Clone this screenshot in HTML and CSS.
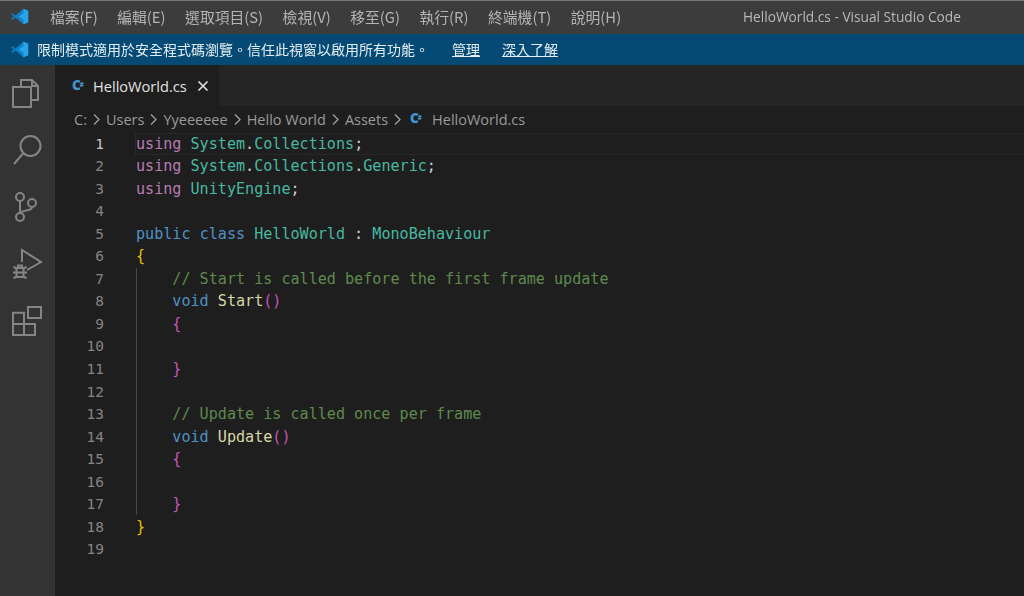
FILE: index.html
```html
<!DOCTYPE html>
<html lang="zh-TW">
<head>
<meta charset="utf-8">
<title>HelloWorld.cs - Visual Studio Code</title>
<link rel="stylesheet" href="styles.css">
</head>
<body>
<div class="app">
  <header class="titlebar">
    <svg class="logo" viewBox="0 0 24 24" preserveAspectRatio="none"><path class="logo-l" d="M17 1 23 4v16l-6 3L7 13.500l-4 3.200L1 15.600 5 12 1 8.400 3 7.300l4 3.200z"/><path class="logo-r" d="M17 1 23 4v16l-6 3zM17 7.500 11 12l6 4.500z" fill-rule="evenodd"/></svg>
    <nav class="menu">
      <span>檔案(F)</span><span>編輯(E)</span><span>選取項目(S)</span><span>檢視(V)</span><span>移至(G)</span><span>執行(R)</span><span>終端機(T)</span><span>說明(H)</span>
    </nav>
    <div class="wintitle">HelloWorld.cs - Visual Studio Code</div>
  </header>
  <div class="banner">
    <svg class="logo" viewBox="0 0 24 24" preserveAspectRatio="none"><path class="logo-l" d="M17 1 23 4v16l-6 3L7 13.500l-4 3.200L1 15.600 5 12 1 8.400 3 7.300l4 3.200z"/><path class="logo-r" d="M17 1 23 4v16l-6 3zM17 7.500 11 12l6 4.500z" fill-rule="evenodd"/></svg>
    <span class="banner-text">限制模式適用於安全程式碼瀏覽。信任此視窗以啟用所有功能。</span>
    <a class="banner-link first">管理</a>
    <a class="banner-link">深入了解</a>
  </div>
  <div class="main">
    <aside class="activity">
      <svg viewBox="0 0 55 57"><path d="M21 22V15H32L38 21V35H31M32 15V21H38M13 22H31V42H13Z"/></svg>
      <svg viewBox="0 0 55 57"><circle cx="30.500" cy="24" r="10"/><path d="M23 31.500 14 42"/></svg>
      <svg viewBox="0 0 55 57"><circle cx="20" cy="18" r="4"/><circle cx="32" cy="24" r="4"/><circle cx="20" cy="38" r="4"/><path d="M20 22V34M32 28C32 33 23 30 20.500 34"/></svg>
      <svg viewBox="0 0 55 57"><path d="M22 26V14L41 26 27 34"/><path d="M16.500 32H23.500V41H16.500ZM16.500 36.500H23.500M18 32V29.500H22V32M13.500 30.500 16.500 33M26.500 30.500 23.500 33M13 36.500H16.500M27 36.500H23.500M13.500 42.500 16.500 40M26.500 42.500 23.500 40"/></svg>
      <svg viewBox="0 0 55 57"><path d="M13 19.700H24V42H13ZM13 31H35V42H24M28 14H41V25H28Z"/></svg>
    </aside>
    <section class="editor-area">
      <div class="tabs">
        <div class="tab">
          <span class="cs-icon">C<sup>#</sup></span>
          <span class="tab-name">HelloWorld.cs</span>
          <svg class="close" viewBox="0 0 12 12"><path d="M1.500 1.500l9 9M10.500 1.500l-9 9"/></svg>
        </div>
      </div>
      <div class="crumbs">
        <span>C:</span>
        <svg class="chev" viewBox="0 0 7 11"><path d="M1 .5 6 5.500 1 10.500"/></svg><span>Users</span>
        <svg class="chev" viewBox="0 0 7 11"><path d="M1 .5 6 5.500 1 10.500"/></svg><span>Yyeeeeee</span>
        <svg class="chev" viewBox="0 0 7 11"><path d="M1 .5 6 5.500 1 10.500"/></svg><span>Hello World</span>
        <svg class="chev" viewBox="0 0 7 11"><path d="M1 .5 6 5.500 1 10.500"/></svg><span>Assets</span>
        <svg class="chev" viewBox="0 0 7 11"><path d="M1 .5 6 5.500 1 10.500"/></svg><span class="cs-icon">C<sup>#</sup></span><span>HelloWorld.cs</span>
      </div>
      <div class="code">
        <div class="guide"></div>
        <div class="line current"><b>1</b><code><em class="kw2">using</em> <em class="ty">System</em>.<em class="ty">Collections</em>;</code></div>
        <div class="line"><b>2</b><code><em class="kw2">using</em> <em class="ty">System</em>.<em class="ty">Collections</em>.<em class="ty">Generic</em>;</code></div>
        <div class="line"><b>3</b><code><em class="kw2">using</em> <em class="ty">UnityEngine</em>;</code></div>
        <div class="line"><b>4</b><code></code></div>
        <div class="line"><b>5</b><code><em class="kw">public</em> <em class="kw">class</em> <em class="ty">HelloWorld</em> : <em class="ty">MonoBehaviour</em></code></div>
        <div class="line"><b>6</b><code><em class="br1">{</em></code></div>
        <div class="line"><b>7</b><code>    <em class="com">// Start is called before the first frame update</em></code></div>
        <div class="line"><b>8</b><code>    <em class="kw">void</em> <em class="fn">Start</em><em class="br2">()</em></code></div>
        <div class="line"><b>9</b><code>    <em class="br2">{</em></code></div>
        <div class="line"><b>10</b><code></code></div>
        <div class="line"><b>11</b><code>    <em class="br2">}</em></code></div>
        <div class="line"><b>12</b><code></code></div>
        <div class="line"><b>13</b><code>    <em class="com">// Update is called once per frame</em></code></div>
        <div class="line"><b>14</b><code>    <em class="kw">void</em> <em class="fn">Update</em><em class="br2">()</em></code></div>
        <div class="line"><b>15</b><code>    <em class="br2">{</em></code></div>
        <div class="line"><b>16</b><code></code></div>
        <div class="line"><b>17</b><code>    <em class="br2">}</em></code></div>
        <div class="line"><b>18</b><code><em class="br1">}</em></code></div>
        <div class="line"><b>19</b><code></code></div>
      </div>
    </section>
  </div>
</div>
</body>
</html>
```
FILE: styles.css
```css
* { box-sizing: border-box; }
html, body { margin: 0; height: 100%; overflow: hidden; background: #1e1e1e; }
body { font-family: "Open Sans", "Noto Sans CJK TC", sans-serif; }
.app { width: 1024px; height: 596px; overflow: hidden; display: flex; flex-direction: column; filter: blur(0.4px); }

.titlebar { height: 34px; background: #3c3c3c; border-top: 1px solid #777; display: flex; align-items: center; color: #b4b4b4; font-size: 14.8px; position: relative; flex: none; padding-bottom: 2px; }
.logo { width: 19px; height: 17px; margin-left: 10px; flex: none; }
.logo-l { fill: #0f7fc7; }
.logo-r { fill: #29a3ea; }
.menu { display: flex; gap: 19.5px; margin-left: 21px; font-family: "Noto Sans CJK TC", sans-serif; }
.wintitle { position: absolute; left: 743px; top: 6px; font-size: 13.7px; color: #b9b9b9; font-family: "Open Sans", sans-serif; white-space: nowrap; }

.banner { height: 31px; background: #054a74; display: flex; align-items: center; color: #e4edf2; font-size: 14px; font-family: "Noto Sans CJK TC", sans-serif; flex: none; padding-bottom: 1px; }
.banner-text { margin-left: 8px; }
.banner-link { text-decoration: underline; margin-left: 22px; }
.banner-link.first { margin-left: 23px; }

.main { flex: 1; display: flex; min-height: 0; }
.activity { width: 55px; background: #333; display: flex; flex-direction: column; flex: none; }
.activity svg { width: 55px; height: 57px; flex: none; fill: none; stroke: #858585; stroke-width: 2; }

.editor-area { flex: 1; display: flex; flex-direction: column; background: #1e1e1e; min-width: 0; }
.tabs { height: 41px; background: #252526; display: flex; flex: none; }
.tab { width: 164px; background: #1e1e1e; display: flex; align-items: center; padding: 0 0 0 17px; color: #e2e2e2; font-size: 14.6px; }
.tab-name { margin-left: 7px; }
.close { width: 12px; height: 12px; margin-left: 10px; fill: none; stroke: #ddd; stroke-width: 1.700; }
.cs-icon { color: #4296cf; font-weight: 800; font-size: 13.5px; line-height: 1; width: 14px; white-space: nowrap; }
.cs-icon sup { font-size: 6px; vertical-align: 3px; line-height: 0; margin-left: -1px; }

.crumbs { height: 26px; display: flex; align-items: center; padding-left: 19px; font-size: 14.5px; color: #9a9a9a; flex: none; }
.chev { width: 7px; height: 11px; margin: 0 6px; flex: none; fill: none; stroke: #a0a0a0; stroke-width: 1.300; }
.crumbs .cs-icon { margin: 0 8px 0 3px; }

.code { position: relative; padding-top: 0.5px; font-family: "DejaVu Sans Mono", monospace; font-size: 15.1px; }
.guide { position: absolute; left: 81px; top: 136px; width: 1px; height: 247px; background: #474747; }
.line { height: 22.55px; line-height: 22.55px; display: flex; white-space: pre; }
.line b { width: 49px; text-align: right; font-weight: 400; color: #858585; flex: none; font-size: 14.5px; }
.line.current b { color: #c6c6c6; }
.line code { font: inherit; margin-left: 32px; color: #d0d0d0; flex: 1; }
.line.current code { border: 1px solid #282828; border-right: 0; line-height: 20.55px; margin-left: 31px; }
em { font-style: normal; }
.kw { color: #4f90c6; }
.kw2 { color: #b87cb3; }
.ty { color: #48b8a1; }
.fn { color: #d8d8a8; }
.com { color: #5f8a4e; }
.br1 { color: #e8c000; }
.br2 { color: #c456b8; }
```
